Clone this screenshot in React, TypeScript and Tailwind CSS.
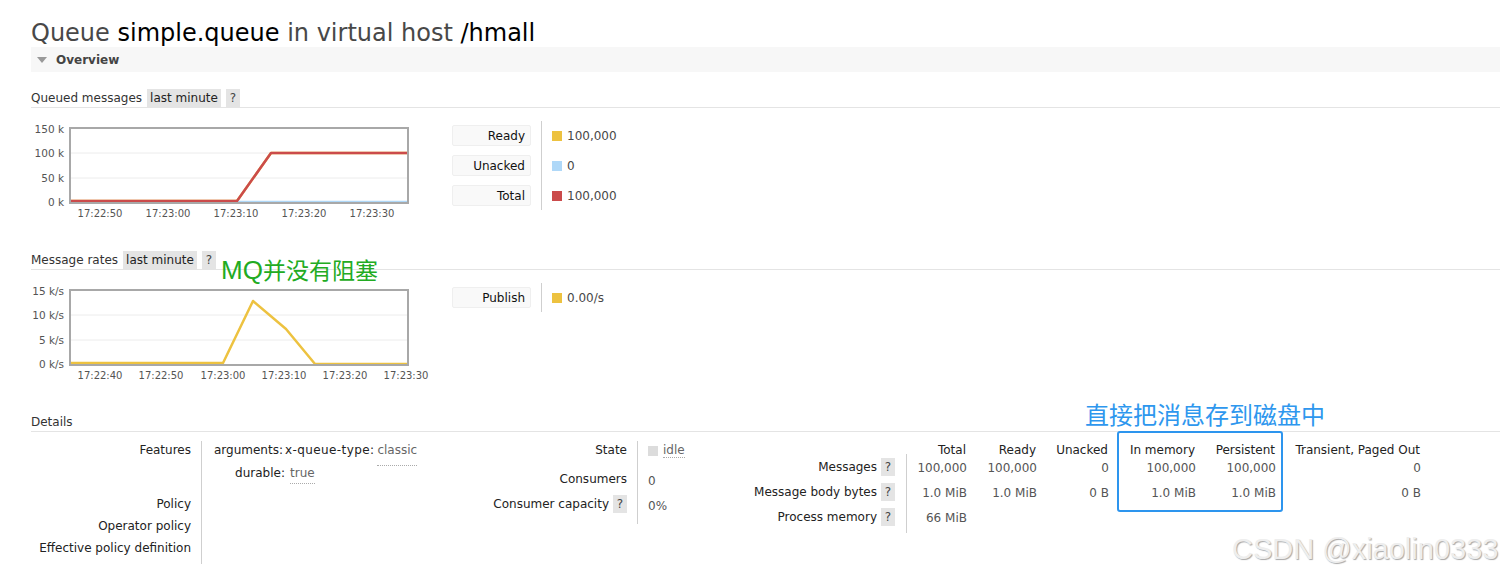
import React from 'react';

const ui = "font-['DejaVu_Sans',Verdana,sans-serif]";

function Chip({ children }: { children: React.ReactNode }) {
  return (
    <span className="inline-flex h-[18px] items-center bg-[#e4e4e4] px-[3px] text-[#222]">
      {children}
    </span>
  );
}

function Help() {
  return (
    <span className="inline-flex h-[18px] w-[14px] items-center justify-center bg-[#e4e4e4] text-[#444]">
      ?
    </span>
  );
}

function SectionHead({ title, range = true }: { title: string; range?: boolean }) {
  return (
    <div className="flex h-[19px] items-center gap-[5px] border-b border-[#e4e4e4] text-[#333]">
      <span>{title}</span>
      {range && (
        <>
          <Chip>last minute</Chip>
          <Help />
        </>
      )}
    </div>
  );
}

type Series = { color: string; points: [number, number][] };

function Chart({
  yLabels,
  xLabels,
  series,
}: {
  yLabels: string[];
  xLabels: [string, number][];
  series: Series[];
}) {
  const yPos = [10, 34, 59, 83];
  return (
    <svg width="410" height="104" viewBox="0 0 410 104" className="shrink-0">
      <line x1="39" y1="34" x2="377" y2="34" stroke="#ececec" />
      <line x1="39" y1="59" x2="377" y2="59" stroke="#ececec" />
      {series.map((s, i) => (
        <polyline
          key={i}
          points={s.points.map((p) => p.join(',')).join(' ')}
          fill="none"
          stroke={s.color}
          strokeWidth="2.5"
          strokeLinejoin="round"
        />
      ))}
      <rect x="39" y="9" width="338" height="75" fill="none" stroke="#a8a8a8" strokeWidth="2" />
      {yLabels.map((l, i) => (
        <text
          key={l}
          x="33"
          y={yPos[i] + 3.5}
          textAnchor="end"
          fontSize="10.5"
          fill="#545454"
          fontFamily="DejaVu Sans, Verdana, sans-serif"
        >
          {l}
        </text>
      ))}
      {xLabels.map(([l, x]) => (
        <text
          key={l}
          x={x}
          y="97.5"
          textAnchor="middle"
          fontSize="10"
          fill="#545454"
          fontFamily="DejaVu Sans, Verdana, sans-serif"
        >
          {l}
        </text>
      ))}
    </svg>
  );
}

function Legend({ items }: { items: [string, string, string][] }) {
  return (
    <div className="ml-[11px] mt-[2px] flex self-start">
      <div className="flex w-[79px] flex-col gap-[9px] py-[4px]">
        {items.map(([label]) => (
          <div
            key={label}
            className="flex h-[21px] items-center justify-end rounded-[2px] border border-[#efefef] bg-[#f9f9f9] pr-[5px] text-[#111]"
          >
            {label}
          </div>
        ))}
      </div>
      <div className="ml-[10px] flex flex-col gap-[9px] border-l border-[#cfcfcf] py-[4px] pl-[10px] pr-[4px]">
        {items.map(([label, color, value]) => (
          <div key={label} className="flex h-[21px] items-center gap-[5px] text-[#484848]">
            <span className={`h-[10px] w-[10px] ${color}`} />
            <span>{value}</span>
          </div>
        ))}
      </div>
    </div>
  );
}

function Abbr({ children }: { children: React.ReactNode }) {
  return (
    <span className="relative top-[2px] border-b border-dotted border-[#aaa] leading-[14px] text-[#666]">
      {children}
    </span>
  );
}

const headers = ['Total', 'Ready', 'Unacked', 'In memory', 'Persistent', 'Transient, Paged Out'];
const colW = ['w-[60px]', 'w-[70px]', 'w-[72px]', 'w-[87px]', 'w-[80px]', 'w-[145px]'];
const rows: [string, string[]][] = [
  ['Messages', ['100,000', '100,000', '0', '100,000', '100,000', '0']],
  ['Message body bytes', ['1.0 MiB', '1.0 MiB', '0 B', '1.0 MiB', '1.0 MiB', '0 B']],
  ['Process memory', ['66 MiB', '', '', '', '', '']],
];

export default function App() {
  return (
    <div className={`relative h-[576px] w-full overflow-hidden bg-white text-[12px] ${ui}`}>
      <div className="pl-[31px]">
        <h1 className="pt-[19px] text-[24px] leading-[28px] text-[#484848]">
          Queue <span className="text-black">simple.queue</span> in virtual host{' '}
          <span className="text-black">/hmall</span>
        </h1>

        <div className="flex h-[25px] items-center gap-[9px] bg-[#f7f7f7] pl-[6px]">
          <svg width="10" height="6" viewBox="0 0 10 6">
            <polygon points="0,0 10,0 5,6" fill="#999" />
          </svg>
          <span className="font-bold text-[#444]">Overview</span>
        </div>

        <div className="mt-[17px]">
          <SectionHead title="Queued messages" />
        </div>
        <div className="mt-[11px] flex">
          <Chart
            yLabels={['150 k', '100 k', '50 k', '0 k']}
            xLabels={[
              ['17:22:50', 69],
              ['17:23:00', 137],
              ['17:23:10', 205],
              ['17:23:20', 273],
              ['17:23:30', 341],
            ]}
            series={[
              { color: '#edc240', points: [[39, 82], [206, 82], [240, 34], [377, 34]] },
              { color: '#afd8f8', points: [[206, 83], [377, 83]] },
              { color: '#cb4b4b', points: [[39, 82], [206, 82], [240, 34], [377, 34]] },
            ]}
          />
          <Legend
            items={[
              ['Ready', 'bg-[#edc240]', '100,000'],
              ['Unacked', 'bg-[#afd8f8]', '0'],
              ['Total', 'bg-[#cb4b4b]', '100,000'],
            ]}
          />
        </div>

        <div className="mt-[28px]">
          <SectionHead title="Message rates" />
        </div>
        <div className="mt-[11px] flex">
          <Chart
            yLabels={['15 k/s', '10 k/s', '5 k/s', '0 k/s']}
            xLabels={[
              ['17:22:40', 69],
              ['17:22:50', 130],
              ['17:23:00', 192],
              ['17:23:10', 253],
              ['17:23:20', 314],
              ['17:23:30', 375],
            ]}
            series={[
              {
                color: '#edc240',
                points: [[39, 82], [192, 82], [222, 20], [255, 48], [284, 83], [377, 83]],
              },
            ]}
          />
          <Legend items={[['Publish', 'bg-[#edc240]', '0.00/s']]} />
        </div>

        <div className="mt-[28px]">
          <SectionHead title="Details" range={false} />
        </div>

        <div className="mt-[9px] flex">
          {/* features / policy */}
          <div className="flex w-[409px]">
            <div className="flex w-[170px] flex-col pr-[10px] text-right leading-[18px] text-[#222]">
              <div className="h-[54px]">Features</div>
              <div className="h-[22px]">Policy</div>
              <div className="h-[22px]">Operator policy</div>
              <div className="h-[25px]">Effective policy definition</div>
            </div>
            <div className="flex flex-col self-start border-l border-[#cfcfcf] pl-[12px] leading-[18px] text-[#222]">
              <div className="flex h-[23px] gap-[3px]">
                <span className="w-[68px] text-right">arguments:</span>
                <span className="tracking-[0.4px]">x-queue-type:</span>
                <Abbr>classic</Abbr>
              </div>
              <div className="flex h-[18px] gap-[5px]">
                <span className="w-[71px] text-right">durable:</span>
                <Abbr>true</Abbr>
              </div>
              <div className="h-[82px]" />
            </div>
          </div>

          {/* state */}
          <div className="flex w-[305px] self-start">
            <div className="flex w-[197px] flex-col pr-[10px] leading-[18px] text-[#222]">
              <div className="h-[29px] text-right">State</div>
              <div className="h-[25px] text-right">Consumers</div>
              <div className="flex h-[29px] justify-end gap-[4px]">
                <span>Consumer capacity</span>
                <Help />
              </div>
            </div>
            <div className="flex flex-col border-l border-[#cfcfcf] pl-[10px] leading-[18px] text-[#555]">
              <div className="flex h-[29px] items-start gap-[5px]">
                <span className="mt-[5px] h-[10px] w-[10px] bg-[#dcdcdc]" />
                <Abbr>idle</Abbr>
              </div>
              <div className="h-[25px] pt-[2px]">0</div>
              <div className="h-[29px] pt-[2px]">0%</div>
            </div>
          </div>

          {/* message counts */}
          <div className="flex flex-col self-start">
            <div className="flex h-[13px] leading-[18px] text-[#222]">
              <div className="w-[161px]" />
              {headers.map((h, i) => (
                <div key={h} className={`${colW[i]} shrink-0 text-right`}>
                  {h}
                </div>
              ))}
            </div>
            <div className="flex">
              <div className="flex w-[161px] flex-col pr-[11px] text-[#222]">
                {rows.map(([label]) => (
                  <div key={label} className="flex h-[25px] items-center justify-end gap-[4px]">
                    <span>{label}</span>
                    <Help />
                  </div>
                ))}
              </div>
              <div className="flex flex-col border-l border-[#cfcfcf] pb-[4px] text-[#555]">
                {rows.map(([label, vals]) => (
                  <div key={label} className="flex h-[25px] items-center pt-[2px]">
                    {vals.map((v, i) => (
                      <div key={i} className={`${colW[i]} shrink-0 text-right`}>
                        {v}
                      </div>
                    ))}
                  </div>
                ))}
              </div>
            </div>
          </div>
        </div>
      </div>

      {/* annotations drawn over the page */}
      <div className="absolute left-[221px] top-[253px] flex items-baseline text-[#22ab22]">
        <span className="font-['Liberation_Sans',Arial,sans-serif] text-[26px] leading-[32px]">MQ</span>
        <span className="font-['Noto_Sans_CJK_SC',sans-serif] text-[23px] leading-[32px]">
          并没有阻塞
        </span>
      </div>
      <div className="absolute left-[1085px] top-[398px] font-['Noto_Sans_CJK_SC',sans-serif] text-[24px] leading-[32px] text-[#2e97ee]">
        直接把消息存到磁盘中
      </div>
      <div className="absolute left-[1117px] top-[431px] h-[81px] w-[166px] rounded-[3px] border-2 border-[#2d95ee]" />
      <div className="absolute left-[1232px] top-[531px] font-['Liberation_Sans',Arial,sans-serif] text-[29px] leading-[36px] text-[#eeeeee] [text-shadow:1px_1px_1px_#a8a8a8]">
        CSDN @xiaolin0333
      </div>
    </div>
  );
}
